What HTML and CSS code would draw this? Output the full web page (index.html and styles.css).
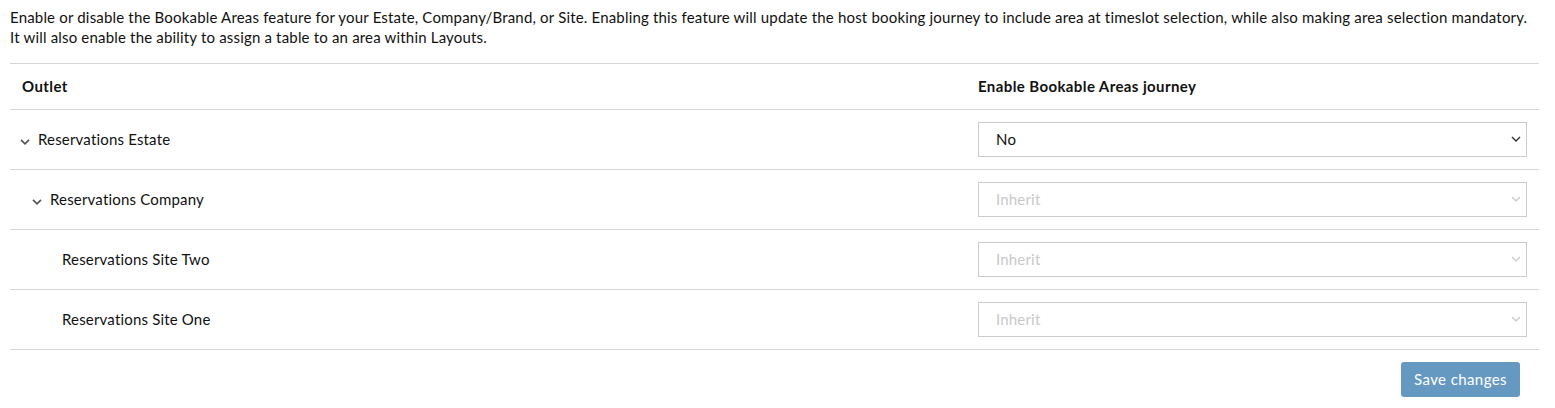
FILE: index.html
```html
<!DOCTYPE html>
<html lang="en">
<head>
<meta charset="utf-8">
<title>Bookable Areas</title>
<link rel="stylesheet" href="styles.css">
</head>
<body>
<div class="page">
  <p class="intro">Enable or disable the Bookable Areas feature for your Estate, Company/Brand, or Site. Enabling this feature will update the host booking journey to include area at timeslot selection, while also making area selection mandatory.<br>It will also enable the ability to assign a table to an area within Layouts.</p>

  <div class="table">
    <div class="row head">
      <div class="cell name">Outlet</div>
      <div class="cell ctl">Enable Bookable Areas journey</div>
    </div>

    <div class="row">
      <div class="cell name lvl0">
        <svg class="tree-chev" width="10" height="6" viewBox="0 0 10 6"><path d="M1 0.8 L5 4.8 L9 0.8" fill="none" stroke="#555" stroke-width="1.7"/></svg>
        <span>Reservations Estate</span>
      </div>
      <div class="cell ctl">
        <div class="select">
          <span>No</span>
          <svg width="10" height="6" viewBox="0 0 10 6"><path d="M1 1 L5 5 L9 1" fill="none" stroke="#333" stroke-width="1.4"/></svg>
        </div>
      </div>
    </div>

    <div class="row">
      <div class="cell name lvl1">
        <svg class="tree-chev" width="10" height="6" viewBox="0 0 10 6"><path d="M1 0.8 L5 4.8 L9 0.8" fill="none" stroke="#555" stroke-width="1.7"/></svg>
        <span>Reservations Company</span>
      </div>
      <div class="cell ctl">
        <div class="select disabled">
          <span>Inherit</span>
          <svg width="10" height="6" viewBox="0 0 10 6"><path d="M1 1 L5 5 L9 1" fill="none" stroke="#c8c8c8" stroke-width="1.2"/></svg>
        </div>
      </div>
    </div>

    <div class="row">
      <div class="cell name lvl2"><span>Reservations Site Two</span></div>
      <div class="cell ctl">
        <div class="select disabled">
          <span>Inherit</span>
          <svg width="10" height="6" viewBox="0 0 10 6"><path d="M1 1 L5 5 L9 1" fill="none" stroke="#c8c8c8" stroke-width="1.2"/></svg>
        </div>
      </div>
    </div>

    <div class="row">
      <div class="cell name lvl2"><span>Reservations Site One</span></div>
      <div class="cell ctl">
        <div class="select disabled">
          <span>Inherit</span>
          <svg width="10" height="6" viewBox="0 0 10 6"><path d="M1 1 L5 5 L9 1" fill="none" stroke="#c8c8c8" stroke-width="1.2"/></svg>
        </div>
      </div>
    </div>
  </div>

  <div class="actions">
    <button class="save" type="button">Save changes</button>
  </div>
</div>
</body>
</html>
```

FILE: styles.css
```css
* { box-sizing: border-box; }

html, body {
  margin: 0;
  background: #fff;
}

body {
  font-family: Lato, "Liberation Sans", sans-serif;
  font-size: 15px;
  letter-spacing: 0.18px;
  color: #111;
}

.page {
  padding: 7px 16px 0 10px;
}

.intro {
  margin: 0 0 16px;
  line-height: 20px;
  white-space: nowrap;
}

.table {
  border-top: 1px solid #d6d6d6;
}

.row {
  display: grid;
  grid-template-columns: 956px 1fr;
  height: 60px;
  border-bottom: 1px solid #d6d6d6;
  align-items: center;
}

.row.head {
  height: 46px;
  font-weight: 700;
  letter-spacing: 0.4px;
}

.cell {
  padding: 0 12px;
  display: flex;
  align-items: center;
  line-height: 20px;
}

.name {
  padding-bottom: 2px;
}

.name.lvl0 { padding-left: 10px; }
.name.lvl1 { padding-left: 22px; }
.name.lvl2 { padding-left: 52px; }

.row.head .cell {
  padding-bottom: 2px;
}

.tree-chev {
  margin: 6px 8px 0 0;
  flex: none;
}

.select {
  flex: 1;
  height: 35px;
  border: 1px solid #cbcbcb;
  display: flex;
  align-items: center;
  justify-content: space-between;
  padding: 0 5px 1px 17px;
  color: #111;
}

.select.disabled {
  color: #c9c9c9;
}

.actions {
  display: flex;
  justify-content: flex-end;
  padding: 12px 19px 0 0;
}

.save {
  width: 119px;
  height: 35px;
  border: none;
  border-radius: 3px;
  background: #6699c2;
  color: #fff;
  font-family: inherit;
  font-size: 15px;
  letter-spacing: 0.4px;
  cursor: pointer;
  padding: 0 0 2px;
}
```
